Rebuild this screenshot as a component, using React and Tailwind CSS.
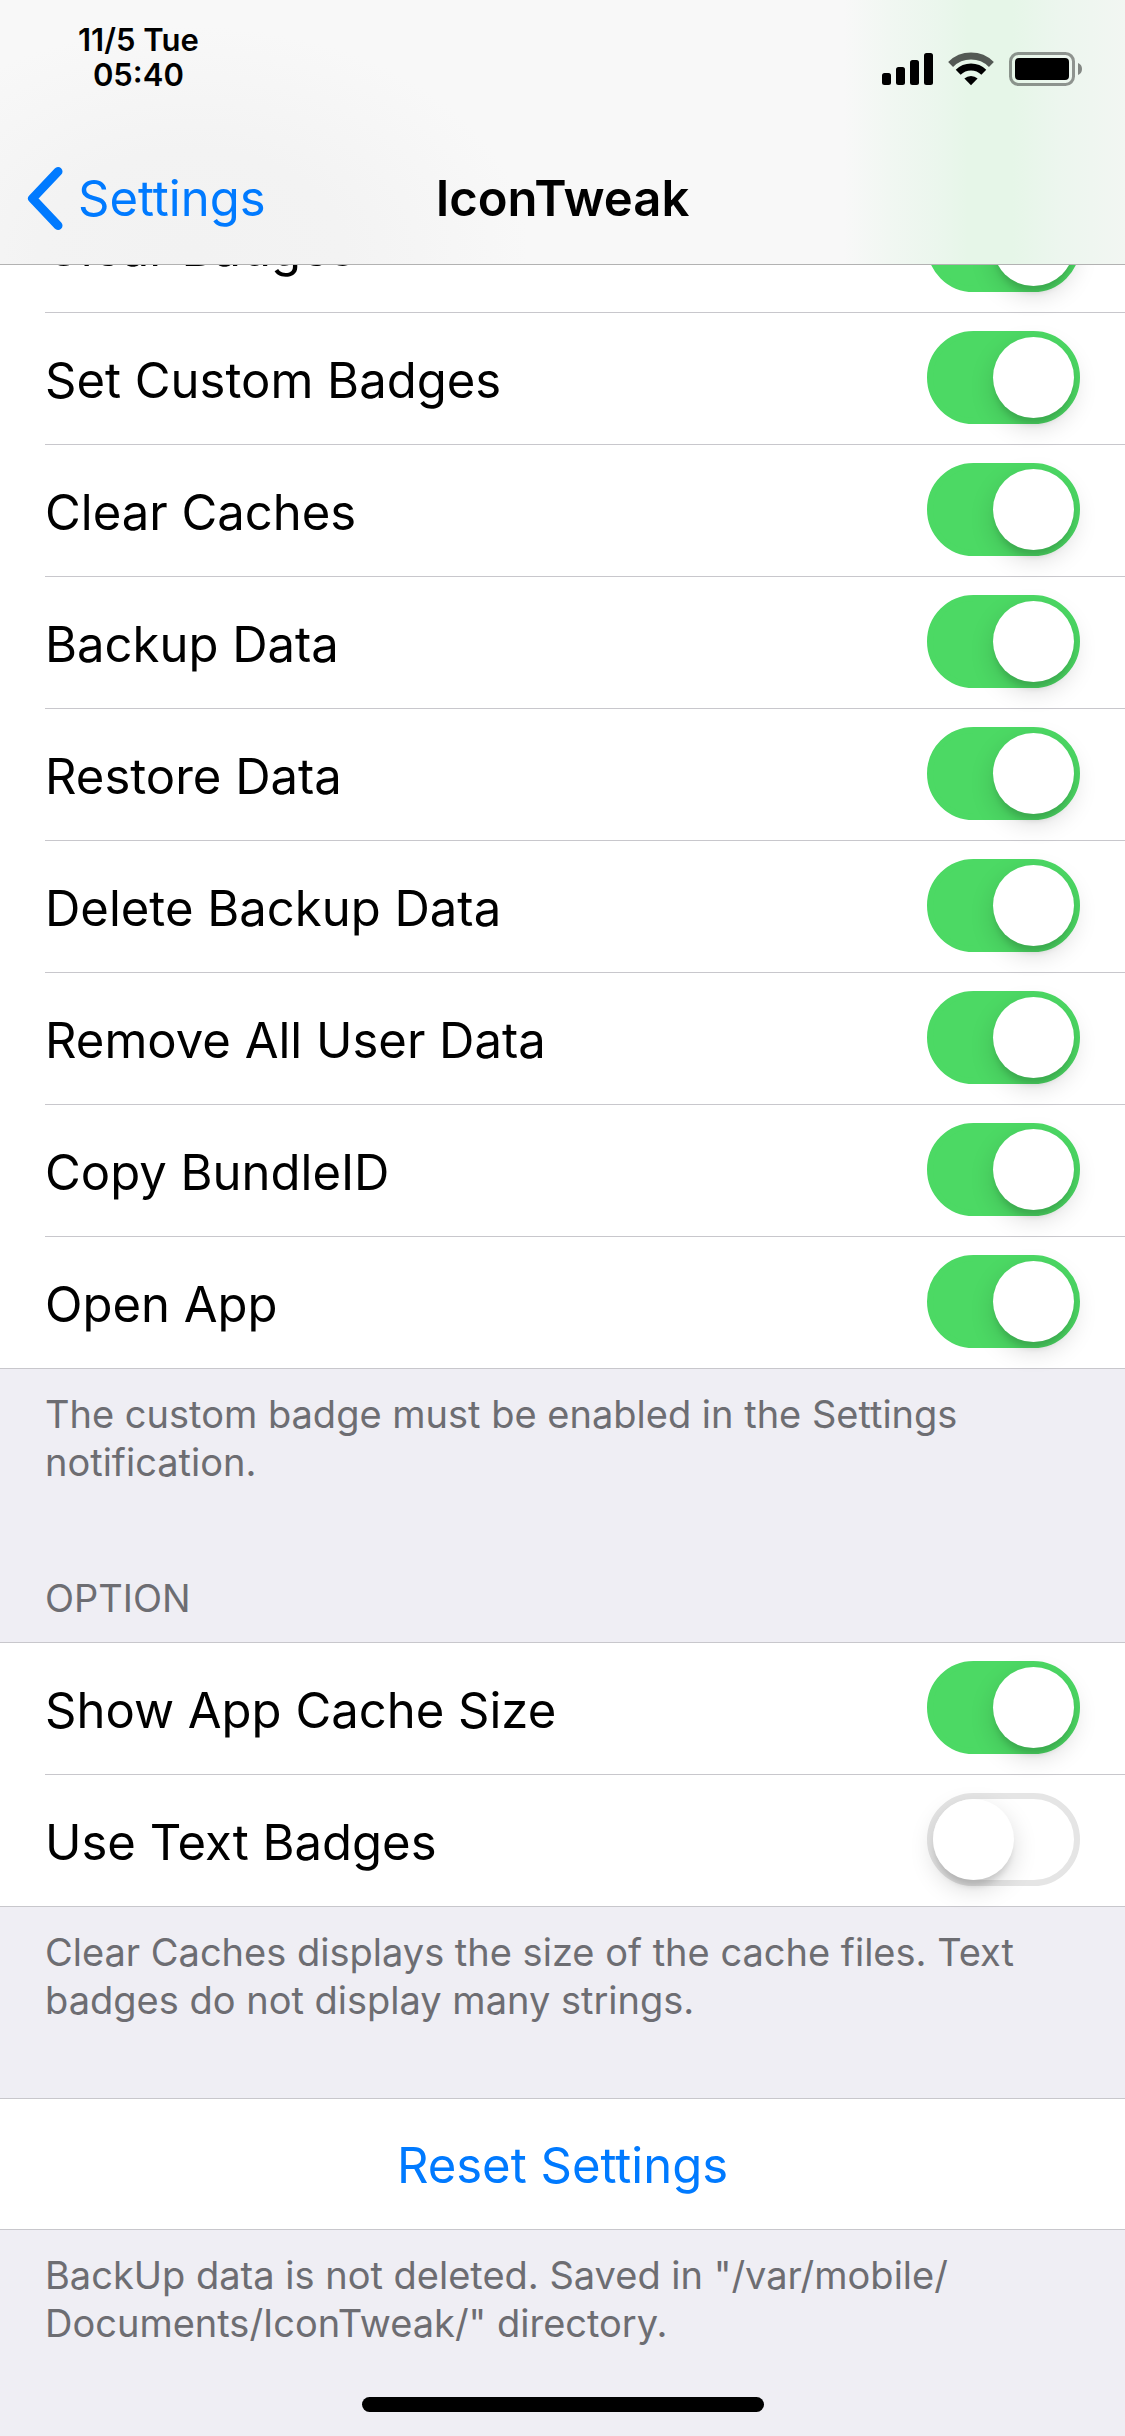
import { useState } from "react";

const ACTIONS = [
  "Clear Badges",
  "Set Custom Badges",
  "Clear Caches",
  "Backup Data",
  "Restore Data",
  "Delete Backup Data",
  "Remove All User Data",
  "Copy BundleID",
  "Open App",
];

const OPTIONS = [
  { label: "Show App Cache Size", on: true },
  { label: "Use Text Badges", on: false },
];

function SwitchRow({ label, on, last }) {
  const [checked, setChecked] = useState(on);
  return (
    <li className="pl-[45px]">
      <label
        className={
          "flex items-center justify-between pr-[45px] pb-[2px] " +
          (last ? "h-[131px]" : "h-[132px] border-b border-[#c8c7cc]")
        }
      >
        <span className="pt-[6px] text-[49px] leading-[60px]">{label}</span>
        <span className="relative flex h-[93px] w-[153px] shrink-0">
          <input
            type="checkbox"
            role="switch"
            checked={checked}
            onChange={(e) => setChecked(e.target.checked)}
            className="peer h-full w-full cursor-pointer appearance-none rounded-full border-6 border-[#e5e5e5] bg-white checked:border-[#4cd964] checked:bg-[#4cd964]"
          />
          <span className="pointer-events-none absolute top-[6px] left-[6px] size-[81px] rounded-full bg-white shadow-[0_9px_24px_rgba(0,0,0,0.15),0_9px_6px_-3px_rgba(0,0,0,0.12)] transition-transform peer-checked:translate-x-[60px]" />
        </span>
      </label>
    </li>
  );
}

function Group({ children }) {
  return <ul className="border-b border-[#c8c7cc] bg-white">{children}</ul>;
}

function Footnote({ children }) {
  return (
    <p className="px-[45px] pt-[21px] text-[38px] leading-[48px] text-[#6d6d72]">{children}</p>
  );
}

function SignalIcon() {
  return (
    <svg width="51" height="34" viewBox="0 0 51 34" aria-label="Signal strength">
      <rect x="0" y="21" width="9" height="12" rx="2.5" />
      <rect x="14" y="15" width="9" height="18" rx="2.5" />
      <rect x="28" y="8" width="9" height="25" rx="2.5" />
      <rect x="42" y="1" width="9" height="32" rx="2.5" />
    </svg>
  );
}

function WifiIcon() {
  return (
    <svg width="46" height="34" viewBox="0 0 46 34" aria-label="Wi-Fi">
      <g fill="none" stroke="#000">
        <path d="M2.600 12.400a29 29 0 0 1 40.800 0" strokeWidth="7" opacity="0.64" />
        <path d="M10.200 20.300a18.200 18.200 0 0 1 25.600 0" strokeWidth="7" />
      </g>
      <path d="M23 33.200l-6.600-6.600a9.400 9.400 0 0 1 13.200 0z" />
    </svg>
  );
}

function BatteryIcon() {
  return (
    <svg width="74" height="34" viewBox="0 0 74 34" aria-label="Battery">
      <rect x="1.5" y="1.5" width="63" height="31" rx="8" fill="none" stroke="#000" strokeOpacity="0.4" strokeWidth="3" />
      <rect x="6" y="6" width="54" height="22" rx="4" />
      <path d="M69 11v12c2.600-1 4-3.300 4-6s-1.400-5-4-6z" fillOpacity="0.45" />
    </svg>
  );
}

export default function App() {
  return (
    <div className="flex min-h-screen flex-col bg-[#efeef4] font-['Inter',sans-serif] text-black">
      <header className="border-b border-[#b2b2b2] bg-[#f8f8f8] bg-[radial-gradient(ellipse_30%_85%_at_17%_95%,#f2f2f2,#f3f3f3_45%,transparent),linear-gradient(90deg,#f8f8f8_75%,#f1f7f2_79%,#eaf6ec_84%,#e6f6e8_86%,#e6f6e8_90%,#ecf6ee_94%,#f2f6f2_100%)]">
        <div className="flex h-[167px] items-start justify-between pr-[42px] pl-[78px]">
          <div className="pt-[22px] text-center text-[31px] leading-[35px] font-semibold">
            <div>11/5 Tue</div>
            <div>05:40</div>
          </div>
          <div className="flex gap-[15px] pt-[52px]">
            <SignalIcon />
            <WifiIcon />
            <BatteryIcon />
          </div>
        </div>
        <div className="grid h-[97px] grid-cols-[1fr_auto_1fr] items-start">
          <a href="#settings" className="flex items-center gap-[15px] pl-[27px] text-[49px] leading-[60px] text-[#007aff]">
            <svg width="36" height="63" viewBox="0 0 36 63" fill="none" stroke="currentColor" strokeWidth="9" strokeLinecap="round" strokeLinejoin="round" aria-hidden="true">
              <path d="M31 4.500L5.500 31.500L31 58.500" />
            </svg>
            Settings
          </a>
          <h1 className="text-[49px] leading-[63px] font-semibold">IconTweak</h1>
        </div>
      </header>

      <main className="grow overflow-hidden">
        <div className="-mt-[84px]">
          <Group>
            {ACTIONS.map((label, i) => (
              <SwitchRow key={label} label={label} on last={i === ACTIONS.length - 1} />
            ))}
          </Group>
        </div>
        <Footnote>The custom badge must be enabled in the Settings notification.</Footnote>

        <h2 className="border-b border-[#c8c7cc] px-[45px] pt-[88px] pb-[20px] text-[38px] leading-[48px] text-[#6d6d72]">
          OPTION
        </h2>
        <Group>
          {OPTIONS.map((o, i) => (
            <SwitchRow key={o.label} label={o.label} on={o.on} last={i === OPTIONS.length - 1} />
          ))}
        </Group>
        <Footnote>
          Clear Caches displays the size of the cache files. Text badges do not display many strings.
        </Footnote>

        <button
          type="button"
          className="mt-[74px] h-[132px] w-full border-y border-[#c8c7cc] bg-white pt-[4px] text-[49px] leading-[60px] text-[#007aff]"
        >
          Reset Settings
        </button>
        <Footnote>
          BackUp data is not deleted. Saved in "/var/mobile/<wbr />Documents/IconTweak/" directory.
        </Footnote>
      </main>

      <div className="mx-auto mb-[24px] h-[15px] w-[402px] rounded-full bg-black" />
    </div>
  );
}
